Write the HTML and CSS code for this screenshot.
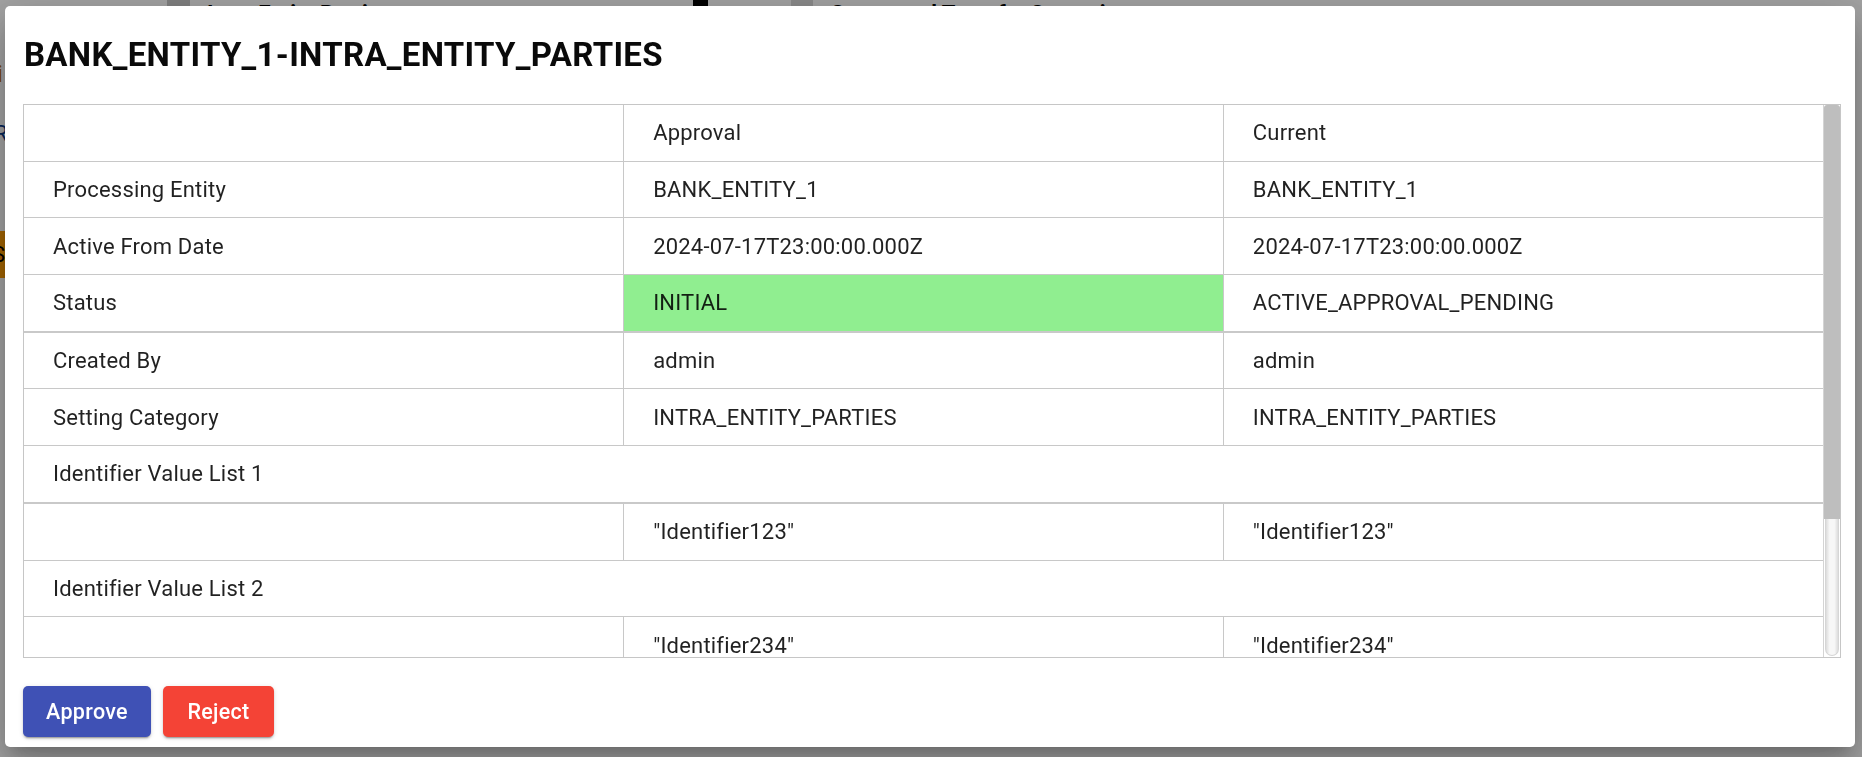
FILE: index.html
```html
<!DOCTYPE html>
<html lang="en">
<head>
<meta charset="utf-8">
<title>Approval</title>
<link rel="stylesheet" href="styles.css">
</head>
<body>
<div class="page">
  <div class="tabs">
    <div class="tab-side"></div>
    <div class="tab-sep"></div>
    <div class="tab-title">Intra Entity Parties</div>
    <div class="tab-icon"></div>
    <div class="tab-sep2"></div>
    <div class="tab-title">Suggested Transfer Scenario</div>
  </div>
  <div class="side">
    <span class="side-i">i</span>
    <span class="side-r">R</span>
    <span class="side-s">S</span>
  </div>
</div>

<div class="overlay">
  <div class="dialog">
    <h2 class="dialog-title">BANK_ENTITY_1-INTRA_ENTITY_PARTIES</h2>
    <div class="table-wrap">
      <div class="table-clip">
        <table class="cmp">
          <colgroup><col><col><col></colgroup>
          <tbody>
            <tr><td></td><td>Approval</td><td>Current</td></tr>
            <tr><td>Processing Entity</td><td>BANK_ENTITY_1</td><td>BANK_ENTITY_1</td></tr>
            <tr><td>Active From Date</td><td>2024-07-17T23:00:00.000Z</td><td>2024-07-17T23:00:00.000Z</td></tr>
            <tr class="thick"><td>Status</td><td class="changed">INITIAL</td><td>ACTIVE_APPROVAL_PENDING</td></tr>
            <tr><td>Created By</td><td>admin</td><td>admin</td></tr>
            <tr><td>Setting Category</td><td>INTRA_ENTITY_PARTIES</td><td>INTRA_ENTITY_PARTIES</td></tr>
            <tr class="thick"><td colspan="3">Identifier Value List 1</td></tr>
            <tr><td></td><td>"Identifier123"</td><td>"Identifier123"</td></tr>
            <tr><td colspan="3">Identifier Value List 2</td></tr>
            <tr><td></td><td>"Identifier234"</td><td>"Identifier234"</td></tr>
          </tbody>
        </table>
      </div>
      <div class="scrollbar" aria-hidden="true">
        <div class="scroll-thumb"></div>
        <div class="scroll-track"></div>
      </div>
    </div>
    <div class="actions">
      <button class="btn btn-approve">Approve</button>
      <button class="btn btn-reject">Reject</button>
    </div>
  </div>
</div>
</body>
</html>
```
FILE: styles.css
```css
html, body {
  margin: 0;
  padding: 0;
  height: 100%;
  overflow: hidden;
}

body {
  background: #ffffff;
  font-family: Roboto, "Liberation Sans", Arial, sans-serif;
}

/* page behind the dialog */
.page {
  height: 100%;
}

.tabs {
  display: flex;
  align-items: flex-start;
  height: 40px;
}

.tab-side {
  width: 167px;
}

.tab-sep {
  width: 23px;
  height: 40px;
  background: #c8c8c8;
  margin-right: 17px;
}

.tab-title {
  font-weight: 700;
  font-size: 22px;
  line-height: 1;
  padding-top: 3px;
  color: #000;
  width: 486px;
}

.tab-icon {
  width: 15px;
  height: 20px;
  background: #000;
  margin-right: 83px;
}

.tab-sep2 {
  width: 22px;
  height: 40px;
  background: #d9d9d9;
  margin-right: 18px;
}

.side {
  display: flex;
  flex-direction: column;
  width: 30px;
  padding-top: 19px;
}

.side-i {
  color: #c07000;
  font-size: 24px;
  line-height: 30px;
  margin-left: -3px;
}

.side-r {
  color: #0b3c8c;
  font-size: 22px;
  line-height: 30px;
  margin-top: 30px;
  margin-left: -6px;
}

.side-s {
  margin-top: 82px;
  background: #ff9d00;
  color: #000;
  height: 47px;
  line-height: 47px;
  font-size: 22px;
  text-indent: -8px;
}

/* overlay + dialog */
.overlay {
  position: fixed;
  inset: 0;
  background: rgba(0, 0, 0, 0.37);
  display: flex;
  padding: 6px 7px 10px 5px;
}

.dialog {
  flex: 1;
  background: #fff;
  border-radius: 5px;
  box-shadow: 0 11px 15px -7px rgba(0,0,0,.2), 0 24px 38px 3px rgba(0,0,0,.14), 0 9px 46px 8px rgba(0,0,0,.12);
  display: flex;
  flex-direction: column;
  padding: 31px 14px 10px 18px;
  min-width: 0;
}

.dialog-title {
  margin: 0 0 31px 1px;
  font-size: 33px;
  line-height: 36px;
  font-weight: 700;
  color: #0a0a0a;
  letter-spacing: 0.3px;
}

.table-wrap {
  height: 552px;
  border: 1px solid #c6c6c6;
  display: flex;
  flex: none;
}

.table-clip {
  flex: 1;
  min-width: 0;
  overflow: hidden;
}

.scrollbar {
  width: 17px;
  box-sizing: border-box;
  border-left: 1px solid #d4d4d4;
  display: flex;
  flex-direction: column;
  background: #fff;
}

.scroll-thumb {
  height: 414px;
  background: #bebebe;
  border-radius: 3px 3px 0 0;
}

.scroll-track {
  flex: 1;
  margin: 0 1px 1px;
  background: linear-gradient(to right, #dcdcdc, #f7f7f7 30%, #f7f7f7 70%, #dcdcdc);
  border: 1px solid #d6d6d6;
  border-top: none;
  border-radius: 0 0 8px 8px;
}

.cmp {
  width: 100%;
  table-layout: fixed;
  border-collapse: collapse;
}

.cmp td {
  height: 55.7px;
  padding: 0 29px;
  font-size: 22px;
  letter-spacing: 0.2px;
  color: rgba(0, 0, 0, 0.87);
  border-bottom: 1px solid #c8c8c8;
  vertical-align: middle;
  white-space: nowrap;
}

.cmp td + td {
  border-left: 1px solid #c8c8c8;
}

.cmp tr.thick td {
  border-bottom: 2px solid #c9c9c9;
}

.cmp td.changed {
  background: #90ee90;
}

.actions {
  display: flex;
  gap: 12px;
  margin-top: 28px;
}

.btn {
  height: 51px;
  border: none;
  border-radius: 5px;
  color: #fff;
  font-family: Roboto, "Liberation Sans", Arial, sans-serif;
  font-size: 21.5px;
  font-weight: 500;
  letter-spacing: 0.3px;
  padding: 0;
  box-shadow: 0 3px 1px -2px rgba(0,0,0,.2), 0 2px 2px 0 rgba(0,0,0,.14), 0 1px 5px 0 rgba(0,0,0,.12);
}

.btn-approve {
  background: #3f51b5;
  width: 128px;
}

.btn-reject {
  background: #f44336;
  width: 111px;
}
```
